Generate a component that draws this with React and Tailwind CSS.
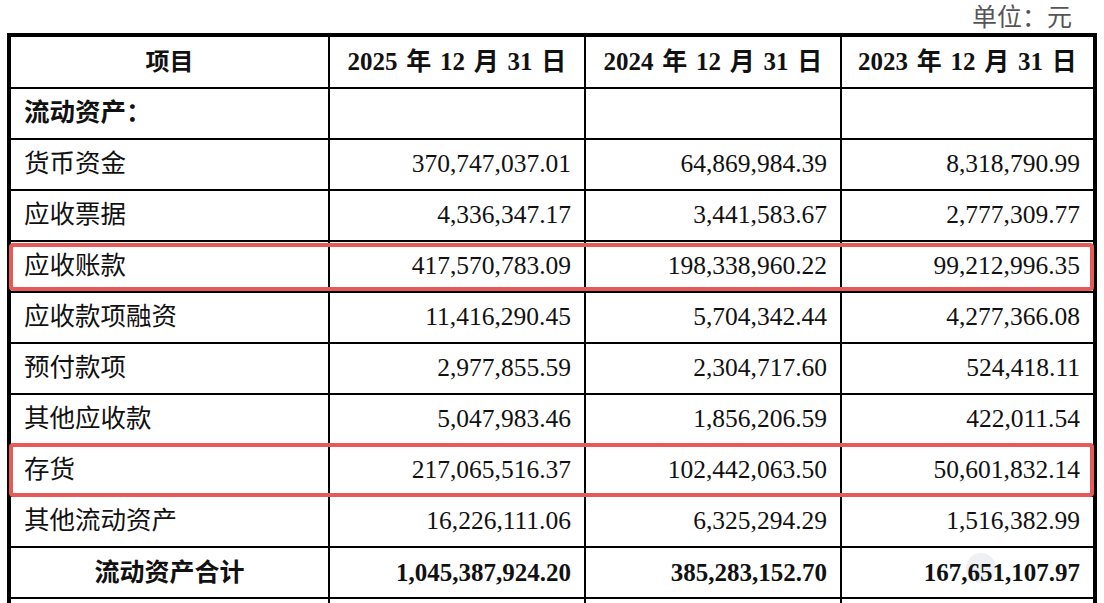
const rows = [
  { name: "流动资产：", bold: true, values: ["", "", ""] },
  { name: "货币资金", values: ["370,747,037.01", "64,869,984.39", "8,318,790.99"] },
  { name: "应收票据", values: ["4,336,347.17", "3,441,583.67", "2,777,309.77"] },
  { name: "应收账款", values: ["417,570,783.09", "198,338,960.22", "99,212,996.35"] },
  { name: "应收款项融资", values: ["11,416,290.45", "5,704,342.44", "4,277,366.08"] },
  { name: "预付款项", values: ["2,977,855.59", "2,304,717.60", "524,418.11"] },
  { name: "其他应收款", values: ["5,047,983.46", "1,856,206.59", "422,011.54"] },
  { name: "存货", values: ["217,065,516.37", "102,442,063.50", "50,601,832.14"] },
  { name: "其他流动资产", values: ["16,226,111.06", "6,325,294.29", "1,516,382.99"] },
  { name: "流动资产合计", total: true, values: ["1,045,387,924.20", "385,283,152.70", "167,651,107.97"] },
  { name: "", values: ["", "", ""] },
];

const headers = ["2025 年 12 月 31 日", "2024 年 12 月 31 日", "2023 年 12 月 31 日"];

export default function App() {
  return (
    <div
      className="relative w-[1104px] h-[603px] overflow-hidden bg-white text-[#111]"
      style={{ fontFamily: '"Liberation Serif", "Noto Sans CJK SC", serif' }}
    >
      <div className="h-[33px] flex items-center justify-end pr-[32px] pt-[2px] text-[25px] text-[#555]">
        单位：元
      </div>

      <div className="ml-[7px] w-[1090px] border-x-4 border-t-4 border-black bg-black grid grid-cols-[317px_254px_254px_251px] gap-[2px]">
        <div className="h-[50px] bg-white flex items-center justify-center text-[24px] font-bold">项目</div>
        {headers.map((h) => (
          <div
            key={h}
            className="h-[50px] bg-white flex items-center justify-center text-[25px] font-bold [word-spacing:2.5px]"
          >
            {h}
          </div>
        ))}

        {rows.map((row, i) => (
          <div key={i} className="contents">
            <div
              className={`h-[49px] bg-white flex items-center ${
                row.total ? "justify-center font-bold text-[25px]" : "pl-[13px] text-[25.5px]"
              } ${row.bold ? "font-bold text-[24px]" : ""}`}
            >
              {row.name}
            </div>
            {row.values.map((v, j) => (
              <div
                key={j}
                className={`relative h-[49px] bg-white flex items-center justify-end pr-[13px] ${
                  row.total ? "font-bold text-[25px]" : "text-[25.5px]"
                }`}
              >
                {row.total && j === 2 && (
                  <div className="absolute left-[124px] top-[5px] w-[30px] h-[30px] rounded-full bg-[#eef0f3]" />
                )}
                <span className="relative">{v}</span>
              </div>
            ))}
          </div>
        ))}
      </div>

      {/* highlight boxes */}
      <div className="absolute left-[9px] top-[243px] w-[1085px] h-[48px] border-4 border-[#e85a5a] rounded-[4px]" />
      <div className="absolute left-[9px] top-[443px] w-[1085px] h-[54px] border-4 border-[#e85a5a] rounded-[4px]" />
    </div>
  );
}
